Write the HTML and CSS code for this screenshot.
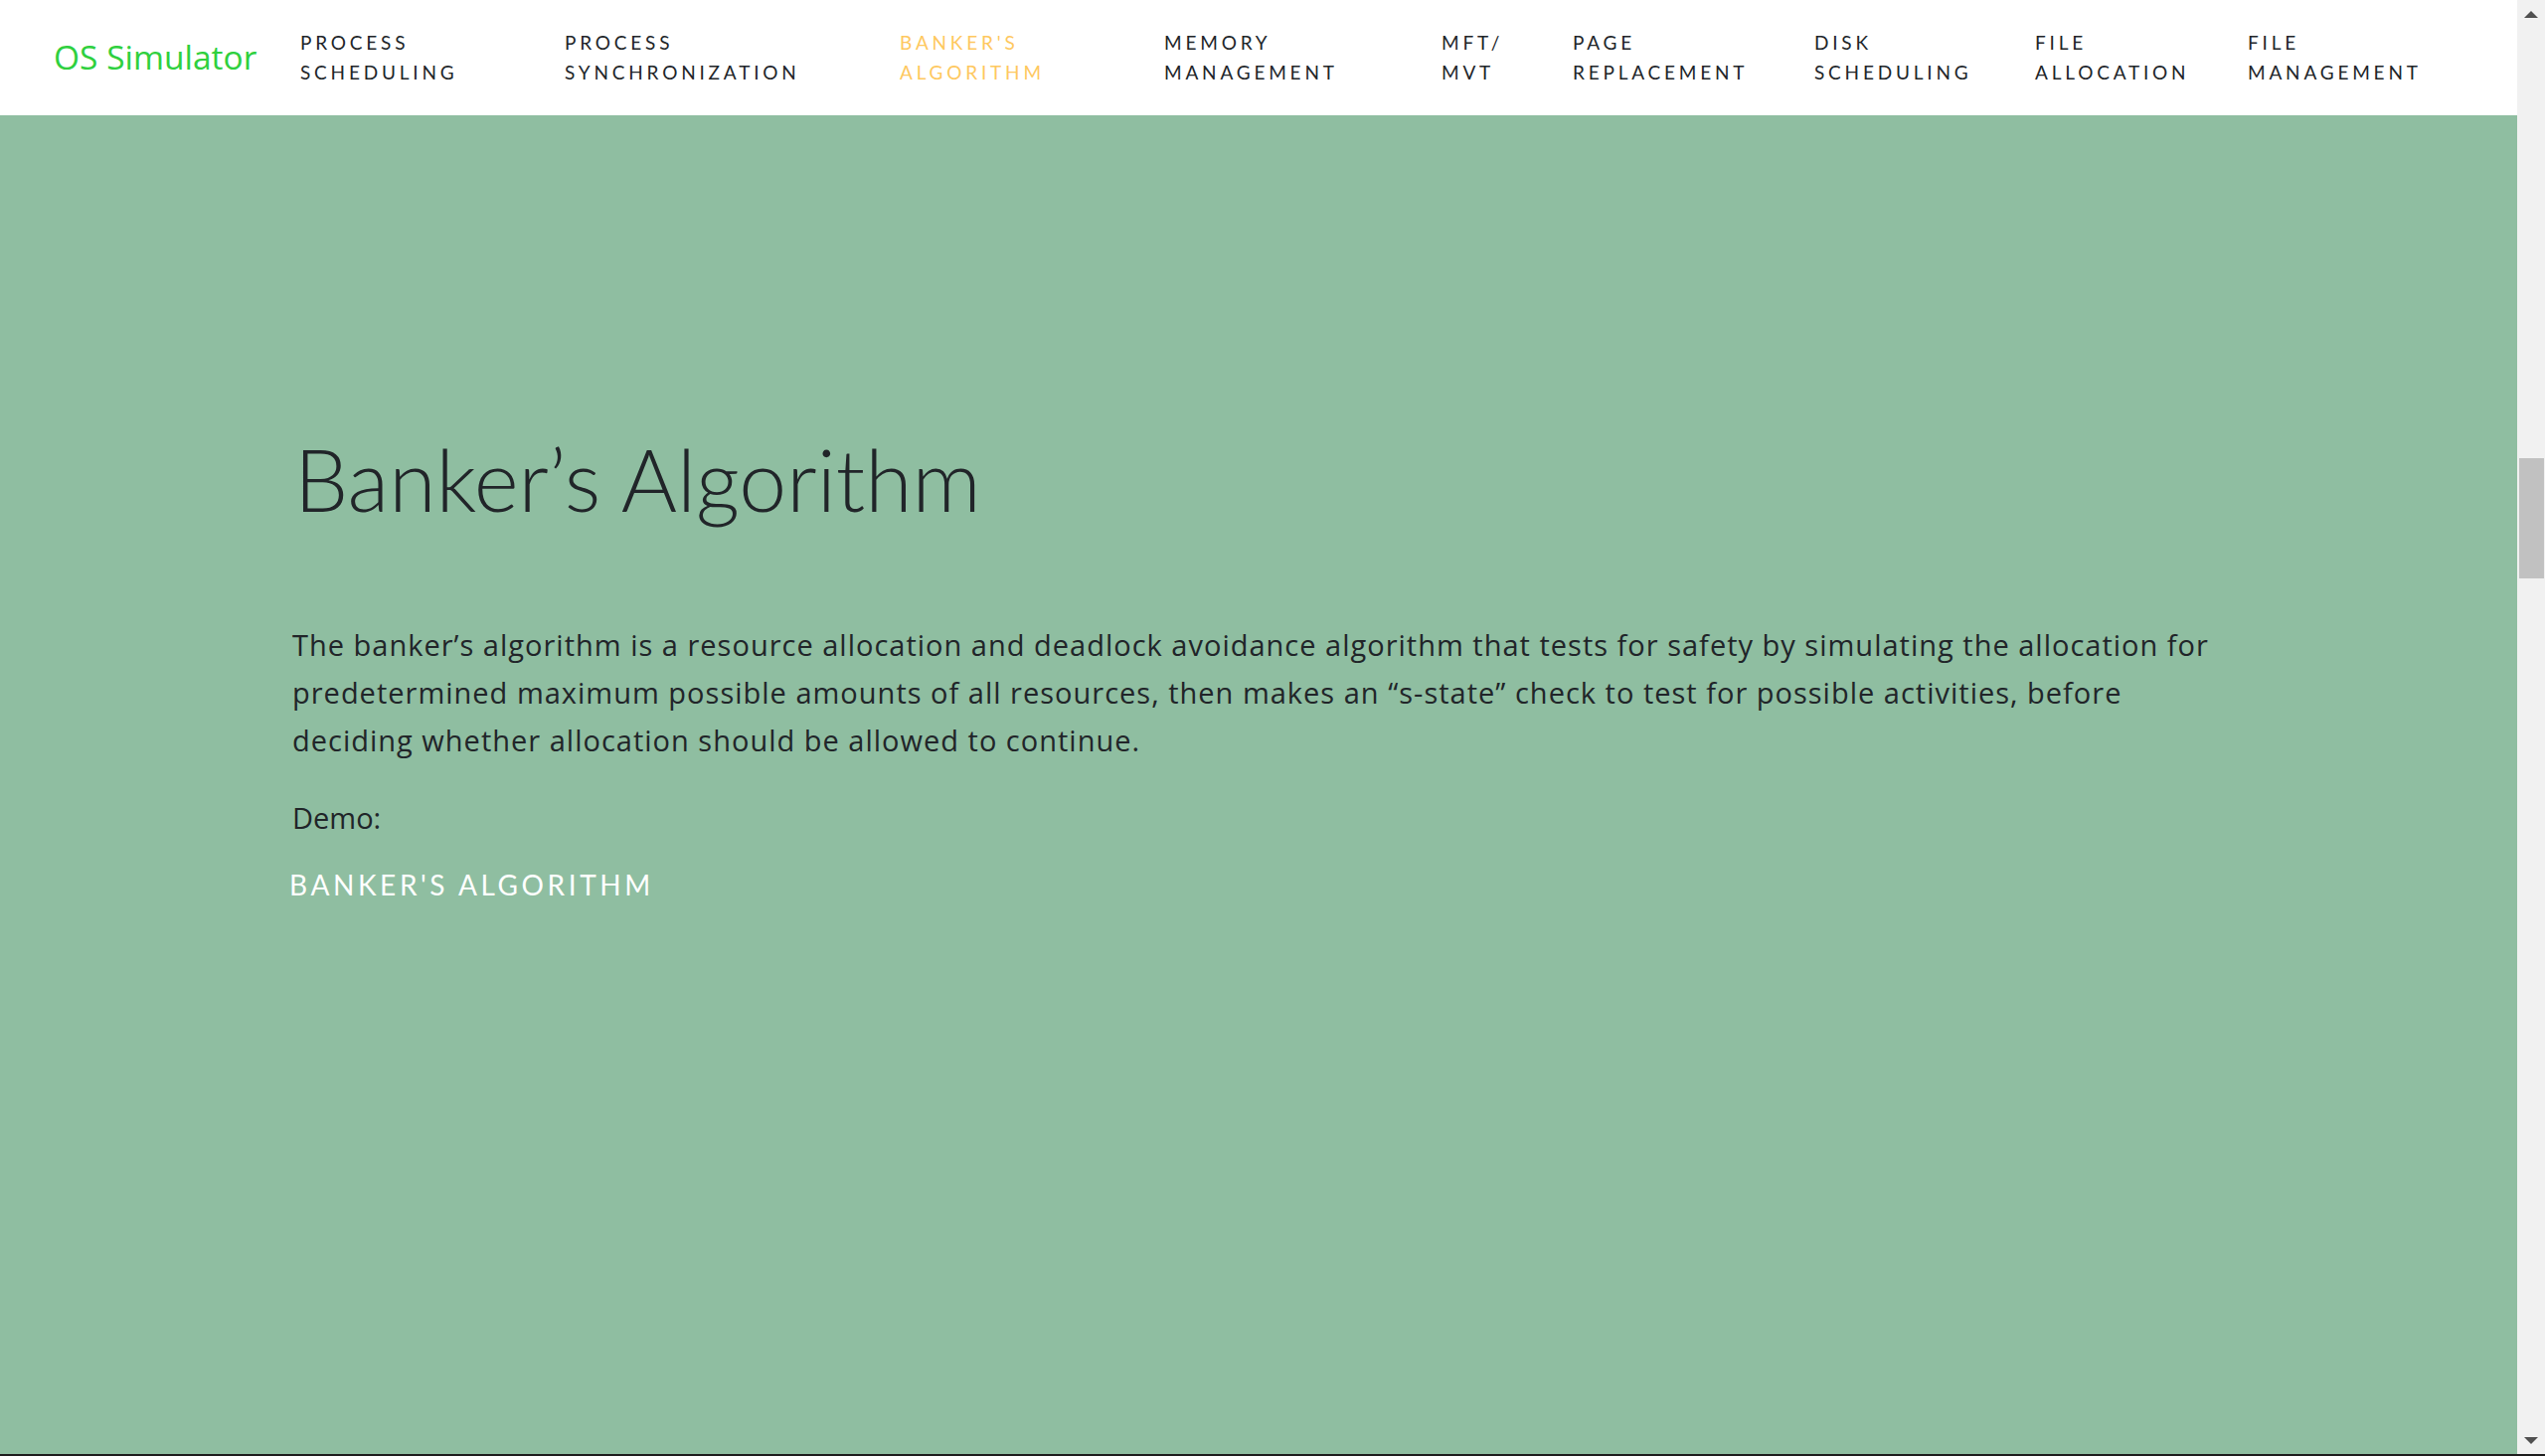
FILE: index.html
```html
<!DOCTYPE html>
<html lang="en">
<head>
<meta charset="utf-8">
<title>OS Simulator - Banker's Algorithm</title>
<link rel="stylesheet" href="styles.css">
</head>
<body>
<div class="shell">
  <div class="page">
    <header class="nav">
      <a class="brand" href="#">OS Simulator</a>
      <nav class="menu">
        <a class="menu-item" href="#">PROCESS<br>SCHEDULING</a>
        <a class="menu-item" href="#">PROCESS<br>SYNCHRONIZATION</a>
        <a class="menu-item active" href="#">BANKER'S<br>ALGORITHM</a>
        <a class="menu-item" href="#">MEMORY<br>MANAGEMENT</a>
        <a class="menu-item" href="#">MFT/<br>MVT</a>
        <a class="menu-item" href="#">PAGE<br>REPLACEMENT</a>
        <a class="menu-item" href="#">DISK<br>SCHEDULING</a>
        <a class="menu-item" href="#">FILE<br>ALLOCATION</a>
        <a class="menu-item" href="#">FILE<br>MANAGEMENT</a>
      </nav>
    </header>
    <main class="content">
      <h1 class="title">Banker’s Algorithm</h1>
      <p class="lead">The banker’s algorithm is a resource allocation and deadlock avoidance algorithm that tests for safety by simulating the allocation for predetermined maximum possible amounts of all resources, then makes an “s-state” check to test for possible activities, before deciding whether allocation should be allowed to continue.</p>
      <p class="demo">Demo:</p>
      <a class="demo-link" href="#">BANKER'S ALGORITHM</a>
    </main>
  </div>
  <div class="scrollbar">
    <div class="sb-btn"><span class="arrow-up"></span></div>
    <div class="sb-track"><div class="sb-thumb"></div></div>
    <div class="sb-btn"><span class="arrow-down"></span></div>
  </div>
</div>
</body>
</html>
```
FILE: styles.css
```css
* { box-sizing: border-box; }
html, body { margin: 0; padding: 0; }
body { width: 2560px; height: 1465px; overflow: hidden; background: #f1f1f1; }

.shell {
  display: flex;
  height: 1465px;
  border-bottom: 2px solid #1d1d1d;
}

.page {
  flex: 1;
  background: #8fbea1;
  display: flex;
  flex-direction: column;
}

.nav {
  height: 116px;
  background: #ffffff;
  display: flex;
  align-items: center;
  padding-left: 54px;
}

.brand {
  width: 248px;
  font-family: "Open Sans", sans-serif;
  font-weight: 400;
  font-size: 33.5px;
  color: #2fd03e;
  text-decoration: none;
  margin-top: -3px;
}

.menu {
  display: grid;
  grid-template-columns: 266px 337px 266px 279px 132px 243px 222px 214px auto;
  align-items: center;
}

.menu-item {
  font-family: "Lato", sans-serif;
  font-size: 19px;
  line-height: 30px;
  letter-spacing: 3.8px;
  color: #212529;
  text-decoration: none;
}

.menu-item.active { color: #fec85f; }

.content {
  padding-left: 294px;
  width: 2250px;
  padding-top: 316px;
  color: #212529;
}

.title {
  margin: 0 0 0 2px;
  font-family: "Lato", sans-serif;
  font-weight: 300;
  font-size: 86px;
  line-height: 100px;
  letter-spacing: 0;
  color: #212529;
}

.lead {
  margin: 93px 0 0 0;
  font-family: "Open Sans", sans-serif;
  font-size: 29px;
  line-height: 48px;
  letter-spacing: 1px;
}

.demo {
  margin: 30px 0 0 0;
  font-family: "Open Sans", sans-serif;
  font-size: 29px;
  line-height: 48px;
}

.demo-link {
  display: inline-block;
  margin-top: 23px;
  margin-left: -3px;
  font-family: "Lato", sans-serif;
  font-size: 28px;
  line-height: 40px;
  letter-spacing: 3.6px;
  color: #ffffff;
  text-decoration: none;
}

.scrollbar {
  width: 28px;
  background: #f1f1f1;
  display: flex;
  flex-direction: column;
}

.sb-btn {
  height: 28px;
  display: flex;
  align-items: center;
  justify-content: center;
}

.arrow-up {
  width: 0; height: 0;
  border-left: 7px solid transparent;
  border-right: 7px solid transparent;
  border-bottom: 7px solid #505050;
}

.arrow-down {
  width: 0; height: 0;
  border-left: 7px solid transparent;
  border-right: 7px solid transparent;
  border-top: 7px solid #505050;
}

.sb-track {
  flex: 1;
  padding-left: 2px;
  padding-right: 1px;
}

.sb-thumb {
  margin-top: 433px;
  height: 121px;
  background: #c1c1c1;
}
```
